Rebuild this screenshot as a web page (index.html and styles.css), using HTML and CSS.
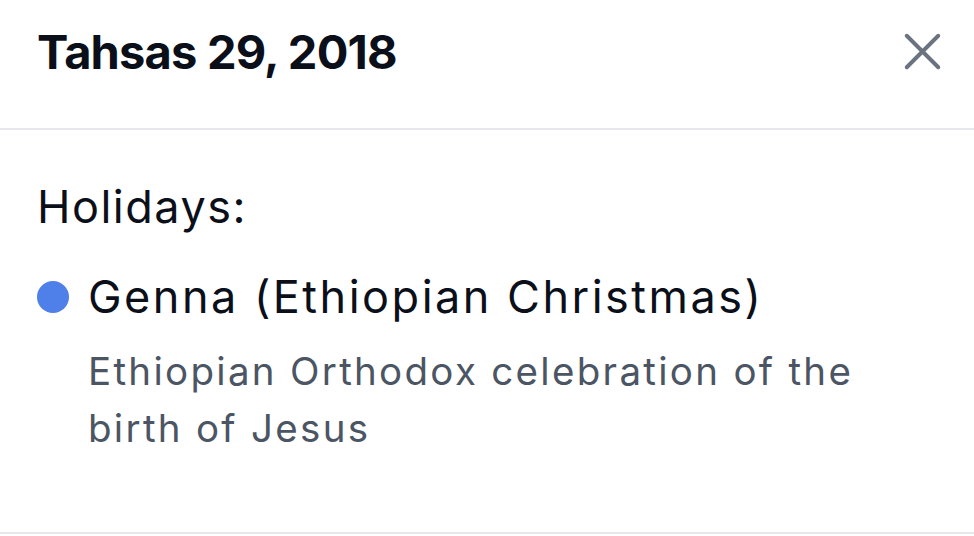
FILE: index.html
```html
<!DOCTYPE html>
<html lang="en">
<head>
<meta charset="utf-8">
<title>Tahsas 29, 2018</title>
<link rel="stylesheet" href="styles.css">
</head>
<body>
<div class="dialog">
  <header class="dialog-header">
    <h1 class="dialog-title">Tahsas 29, 2018</h1>
    <button class="close-btn" aria-label="Close">
      <svg viewBox="0 0 24 24" width="63" height="63" fill="none" stroke="currentColor" stroke-width="1.5" stroke-linecap="round" stroke-linejoin="round"><path d="M6 18L18 6M6 6l12 12"/></svg>
    </button>
  </header>
  <section class="dialog-body">
    <h2 class="section-title">Holidays:</h2>
    <div class="holiday">
      <span class="holiday-dot"></span>
      <div class="holiday-text">
        <div class="holiday-name">Genna (Ethiopian Christmas)</div>
        <p class="holiday-desc">Ethiopian Orthodox celebration of the birth of Jesus</p>
      </div>
    </div>
  </section>
</div>
</body>
</html>
```

FILE: styles.css
```css
html, body {
  margin: 0;
  padding: 0;
  background: #ffffff;
}
body {
  font-family: "Inter", "Liberation Sans", sans-serif;
  color: #0b0f1a;
}
.dialog {
  width: 974px;
  height: 536px;
  overflow: hidden;
}
.dialog-header {
  display: flex;
  align-items: center;
  justify-content: space-between;
  padding: 20px 20px 45px 37px;
  border-bottom: 2px solid #e5e7eb;
}
.dialog-title {
  margin: 0;
  font-size: 47px;
  font-weight: 700;
  line-height: 63px;
  letter-spacing: -0.8px;
}
.close-btn {
  border: 0;
  background: none;
  padding: 0;
  color: #6b7280;
  display: flex;
}
.dialog-body {
  padding: 47px 20px 0 37px;
  height: 355px;
  border-bottom: 2px solid #e5e7eb;
}
.section-title {
  margin: 0;
  font-size: 45px;
  font-weight: 400;
  line-height: 60px;
  letter-spacing: 1.5px;
}
.holiday {
  display: flex;
  align-items: flex-start;
  gap: 19px;
  margin-top: 30px;
}
.holiday-dot {
  flex: none;
  width: 32px;
  height: 32px;
  border-radius: 50%;
  background: #4f7fe9;
  margin-top: 14px;
}
.holiday-name {
  font-size: 45px;
  line-height: 60px;
  letter-spacing: 2.5px;
}
.holiday-desc {
  margin: 16px 0 0;
  font-size: 38.5px;
  line-height: 57px;
  color: #4b5563;
  letter-spacing: 2.3px;
  max-width: 790px;
}
```
